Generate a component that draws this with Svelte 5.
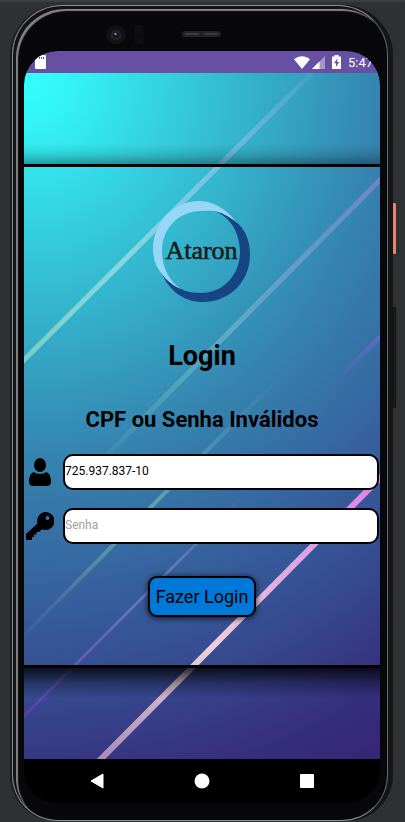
<script>
  let cpf = $state('725.937.837-10');
  let senha = $state('');
</script>

<div class="stage">
  <div class="phone">
    <div class="bezel">
      <svg class="sensors" width="120" height="24" viewBox="0 0 120 24" aria-hidden="true">
        <circle cx="12" cy="12" r="9.500" fill="#131314" />
        <circle cx="12" cy="12" r="5" fill="#20242c" />
        <circle cx="12" cy="12" r="3" fill="#10141d" />
        <circle cx="11.500" cy="11" r="1.300" fill="#6d88ba" />
        <rect x="31" y="2.500" width="8" height="18" rx="4" fill="#0c0c0d" stroke="#131315" />
        <circle cx="35" cy="7.500" r="3" fill="#0f0f11" />
        <circle cx="35" cy="16.500" r="3" fill="#0f0f11" />
        <rect x="78" y="8" width="39" height="6" rx="3" fill="#222223" />
        <rect x="81" y="10" width="14" height="2" rx="1" fill="#3c3c3e" />
        <rect x="100" y="10" width="14" height="2" rx="1" fill="#3c3c3e" />
      </svg>
    </div>

    <div class="screen">
      <div class="status">
        <svg class="sd" width="11" height="14" viewBox="0 0 11 14" aria-hidden="true">
          <path d="M4 0h6a1 1 0 0 1 1 1v12a1 1 0 0 1-1 1H1a1 1 0 0 1-1-1V4z" fill="#fff" />
          <path d="M4.500 2v2M6.500 2v2M8.500 2v2" stroke="#6750a4" />
        </svg>
        <svg width="16" height="13" viewBox="0 0 16 13" aria-hidden="true">
          <path d="M0 3.200C5 -.8 11 -.8 16 3.200L8 13z" fill="#fff" />
        </svg>
        <svg class="signal" width="13" height="13" viewBox="0 0 13 13" aria-hidden="true">
          <path d="M13 0v13H0z" fill="#a497c8" />
          <path d="M7.500 5.500V13H0z" fill="#fff" />
        </svg>
        <svg class="battery" width="9" height="14" viewBox="0 0 9 14" aria-hidden="true">
          <path d="M2.500 0h4v1.500H9V14H0V1.500h2.500z" fill="#fff" />
          <path d="M5.300 3.500L2 8.300h2.100v3.700L7.200 7H5.300z" fill="#6750a4" />
        </svg>
        <span>5:47</span>
      </div>

      <div class="app">
        <svg class="wallpaper" viewBox="0 0 356 686" preserveAspectRatio="none" aria-hidden="true">
          <defs>
            <linearGradient id="s1" gradientUnits="userSpaceOnUse" x1="288" y1="0" x2="0" y2="287">
              <stop offset="0" stop-color="#7db0e0" stop-opacity=".2" />
              <stop offset=".3" stop-color="#88c4e8" stop-opacity=".75" />
              <stop offset=".65" stop-color="#9cdde4" stop-opacity=".8" />
              <stop offset="1" stop-color="#8fdccb" stop-opacity=".75" />
            </linearGradient>
            <linearGradient id="s2" gradientUnits="userSpaceOnUse" x1="356" y1="107" x2="60" y2="405">
              <stop offset="0" stop-color="#8289d2" stop-opacity=".7" />
              <stop offset=".5" stop-color="#74b6cf" stop-opacity=".65" />
              <stop offset="1" stop-color="#7dcabc" stop-opacity="0" />
            </linearGradient>
            <linearGradient id="s3" gradientUnits="userSpaceOnUse" x1="356" y1="264" x2="310" y2="310">
              <stop offset="0" stop-color="#6868c8" stop-opacity=".85" />
              <stop offset="1" stop-color="#6868c8" stop-opacity="0" />
            </linearGradient>
            <linearGradient id="s4" gradientUnits="userSpaceOnUse" x1="256" y1="304" x2="0" y2="562">
              <stop offset="0" stop-color="#69afb9" stop-opacity="0" />
              <stop offset=".3" stop-color="#69afb9" stop-opacity=".45" />
              <stop offset=".55" stop-color="#78b7b5" stop-opacity=".75" />
              <stop offset="1" stop-color="#6090b0" stop-opacity=".1" />
            </linearGradient>
            <linearGradient id="s5" gradientUnits="userSpaceOnUse" x1="226" y1="417" x2="0" y2="643">
              <stop offset="0" stop-color="#6c8bc4" stop-opacity="0" />
              <stop offset=".4" stop-color="#7385c8" stop-opacity=".8" />
              <stop offset="1" stop-color="#5942ac" stop-opacity=".9" />
            </linearGradient>
            <linearGradient id="s6" gradientUnits="userSpaceOnUse" x1="356" y1="405" x2="74" y2="686">
              <stop offset="0" stop-color="#df82e6" />
              <stop offset=".35" stop-color="#e0abe0" />
              <stop offset=".6" stop-color="#ecd0da" />
              <stop offset="1" stop-color="#a98ab9" />
            </linearGradient>
          </defs>
          <g fill="none">
            <path d="M290 -2L-3 290" stroke="url(#s1)" stroke-width="5" />
            <path d="M359 104L60 405" stroke="url(#s2)" stroke-width="5" />
            <path d="M359 261L310 310" stroke="url(#s3)" stroke-width="5" />
            <path d="M256 304L0 562" stroke="url(#s4)" stroke-width="4" />
            <path d="M226 417L-3 646" stroke="url(#s5)" stroke-width="3" />
            <path d="M359 402L74 689" stroke="url(#s6)" stroke-width="6" />
          </g>
        </svg>

        <form class="panel" onsubmit={(e) => e.preventDefault()}>
          <svg class="logo" width="98" height="102" viewBox="14 11 98 102" role="img" aria-label="Ataron">
            <path d="M23 84C32 104 48 112 64 112C91 112 111 91 111 65C111 50 106 39 97 32C90 26 82 22 74 21C90 25 101 42 101 62C101 85 84 103 62 103C55 103 48 102 42 99C35 96 28 91 23 84Z" fill="#174583" />
            <path d="M97 32C87 18 73 11 60 11C34 11 14 33 14 59C14 69 17 77 23 84C28 91 35 96 42 99C30 91 23 77 23 61C23 38 40 21 62 21C66 20.500 70 20.500 74 21C82 22 90 26 97 32Z" fill="#98d6f7" />
            <text x="62.500" y="69" text-anchor="middle">Ataron</text>
          </svg>
          <h1>Login</h1>
          <h2>CPF ou Senha Inválidos</h2>

          <div class="row">
            <label for="cpf" aria-label="CPF">
              <svg width="22" height="28" viewBox="0 0 22 28">
                <ellipse cx="11" cy="7" rx="6" ry="7" />
                <path d="M5 14C7 16.500 15 16.500 17 14C20.500 15 22 19 22 24C22 27 20 28 17 28H5C2 28 0 27 0 24C0 19 1.500 15 5 14Z" />
              </svg>
            </label>
            <input id="cpf" type="text" bind:value={cpf} />
          </div>
          <div class="row">
            <label for="senha" aria-label="Senha">
              <svg width="28" height="28" viewBox="0 0 28 28">
                <path fill-rule="evenodd" d="M19 0a9 9 0 1 1-3 17.300L13 20H10.500v2.500H8V25H6v3H0V22L11.500 11.500A9 9 0 0 1 19 0ZM21.500 4a2 2 0 1 0 .01 4a2 2 0 1 0-.01-4Z" />
              </svg>
            </label>
            <input id="senha" type="password" placeholder="Senha" bind:value={senha} />
          </div>

          <button class="submit" type="submit">Fazer Login</button>
        </form>
      </div>

      <nav>
        <button aria-label="Voltar">
          <svg width="14" height="16" viewBox="0 0 14 16"><path d="M13 1v14L1 8z" fill="#fff" stroke="#fff" stroke-linejoin="round" /></svg>
        </button>
        <button aria-label="Início">
          <svg width="16" height="16" viewBox="0 0 16 16"><circle cx="8" cy="8" r="7.500" fill="#fff" /></svg>
        </button>
        <button aria-label="Recentes">
          <svg width="14" height="14" viewBox="0 0 14 14"><rect width="14" height="14" rx="1" fill="#fff" /></svg>
        </button>
      </nav>
    </div>
    <div class="key power"></div>
    <div class="key volume"></div>
  </div>
</div>

<style>
  :global(body) {
    background: #2f3032;
  }
  .stage,
  .stage * {
    box-sizing: border-box;
  }
  .stage {
    min-height: 100vh;
    padding: 5px 17px 1px 12px;
    display: flex;
    background: #2f3032;
    box-shadow: inset 0 2px 1px #3a4043;
    font-family: Roboto, 'Liberation Sans', sans-serif;
    color: #000;
  }
  .phone {
    position: relative;
    flex: 1;
    min-width: 0;
    display: flex;
    flex-direction: column;
    padding: 0 7px 17px 11px;
    border: 1px solid #8b8c8e;
    border-right-color: #66676a;
    border-radius: 50px 50px 46px 46px;
    background: #08080a;
    box-shadow:
      inset 3px 3px 0 #141416,
      inset 5px 5px 1px #858583,
      5px 0 0 #151617,
      -2px 0 0 #1c1d1e;
  }
  .bezel {
    height: 45px;
    padding: 17px 0 0 80px;
  }
  .sensors {
    display: block;
  }
  .screen {
    flex: 1;
    display: flex;
    flex-direction: column;
    overflow: hidden;
    border-radius: 34px;
    background: #000;
  }
  .status {
    height: 22px;
    padding: 0 7px 0 11px;
    display: flex;
    align-items: center;
    background: #6750a4;
    color: #fff;
    font-size: 13px;
  }
  .sd {
    margin-right: auto;
  }
  .signal {
    margin-left: 2px;
  }
  .battery {
    margin: 0 7px;
  }
  .app {
    position: relative;
    flex: 1;
    display: flex;
    flex-direction: column;
    justify-content: center;
    background: radial-gradient(
      740px 800px at 0 0,
      #33ffff 0,
      #33f6f9 40px,
      #34bfd4 190px,
      #3586b0 350px,
      #365f9c 490px,
      #364b90 570px,
      #36307d 660px,
      #35206f 760px
    );
  }
  .wallpaper {
    position: absolute;
    inset: 0;
    width: 100%;
    height: 100%;
  }
  .panel {
    position: relative;
    display: flex;
    flex-direction: column;
    align-items: center;
    padding: 34px 0 48px;
    border: solid #000;
    border-width: 3px 0;
  }
  .panel::before,
  .panel::after {
    content: '';
    position: absolute;
    left: 0;
    right: 0;
    pointer-events: none;
  }
  .panel::before {
    bottom: 100%;
    height: 20px;
    margin-bottom: 3px;
    background: linear-gradient(transparent, rgba(0, 0, 0, 0.1) 50%, rgba(0, 0, 0, 0.32));
  }
  .panel::after {
    top: 100%;
    height: 30px;
    margin-top: 3px;
    background: linear-gradient(rgba(0, 0, 0, 0.8), rgba(0, 0, 0, 0.3) 50%, transparent);
  }
  .logo text {
    font: 26px 'Liberation Serif', serif;
    fill: #1d1d1b;
    stroke: #1d1d1b;
    stroke-width: 0.6px;
  }
  h1,
  h2 {
    margin: 0;
    font-weight: 700;
  }
  h1 {
    margin-top: 35px;
    font-size: 27px;
    line-height: 36px;
  }
  h2 {
    margin: 30px 0 18px;
    font-size: 22px;
    line-height: 32px;
  }
  .row {
    width: 100%;
    display: flex;
    align-items: center;
    padding-right: 1px;
    margin-bottom: 18px;
  }
  .row label {
    width: 39px;
    flex: none;
    padding-right: 7px;
    display: flex;
    justify-content: center;
  }
  input {
    flex: 1;
    min-width: 0;
    height: 36px;
    padding: 0 0 3px;
    border: 2px solid #000;
    border-radius: 10px;
    background: #fff;
    color: #000;
    font: 12px/16px Roboto, 'Liberation Sans', sans-serif;
    outline: none;
  }
  input::placeholder {
    color: #a0a0a0;
    opacity: 1;
  }
  .submit {
    margin-top: 14px;
    height: 41px;
    padding: 0 6px;
    border: 2px solid #000;
    border-radius: 9px;
    background: #0078d7;
    box-shadow: 0 1px 6px rgba(0, 0, 0, 0.8);
    color: #000;
    font: 18px/24px Roboto, 'Liberation Sans', sans-serif;
  }
  nav {
    height: 44px;
    display: flex;
    justify-content: space-around;
    padding: 0 20px;
    background: #000;
  }
  nav button {
    width: 32px;
    padding: 0;
    border: 0;
    background: none;
    display: flex;
    align-items: center;
    justify-content: center;
  }
  .key {
    position: absolute;
    right: -9px;
    width: 3px;
    border-radius: 1px;
  }
  .power {
    top: 197px;
    height: 51px;
    background: #e8836b;
  }
  .volume {
    top: 301px;
    height: 101px;
    background: #202122;
    border: solid #111;
    border-width: 2px 1px;
  }
</style>
